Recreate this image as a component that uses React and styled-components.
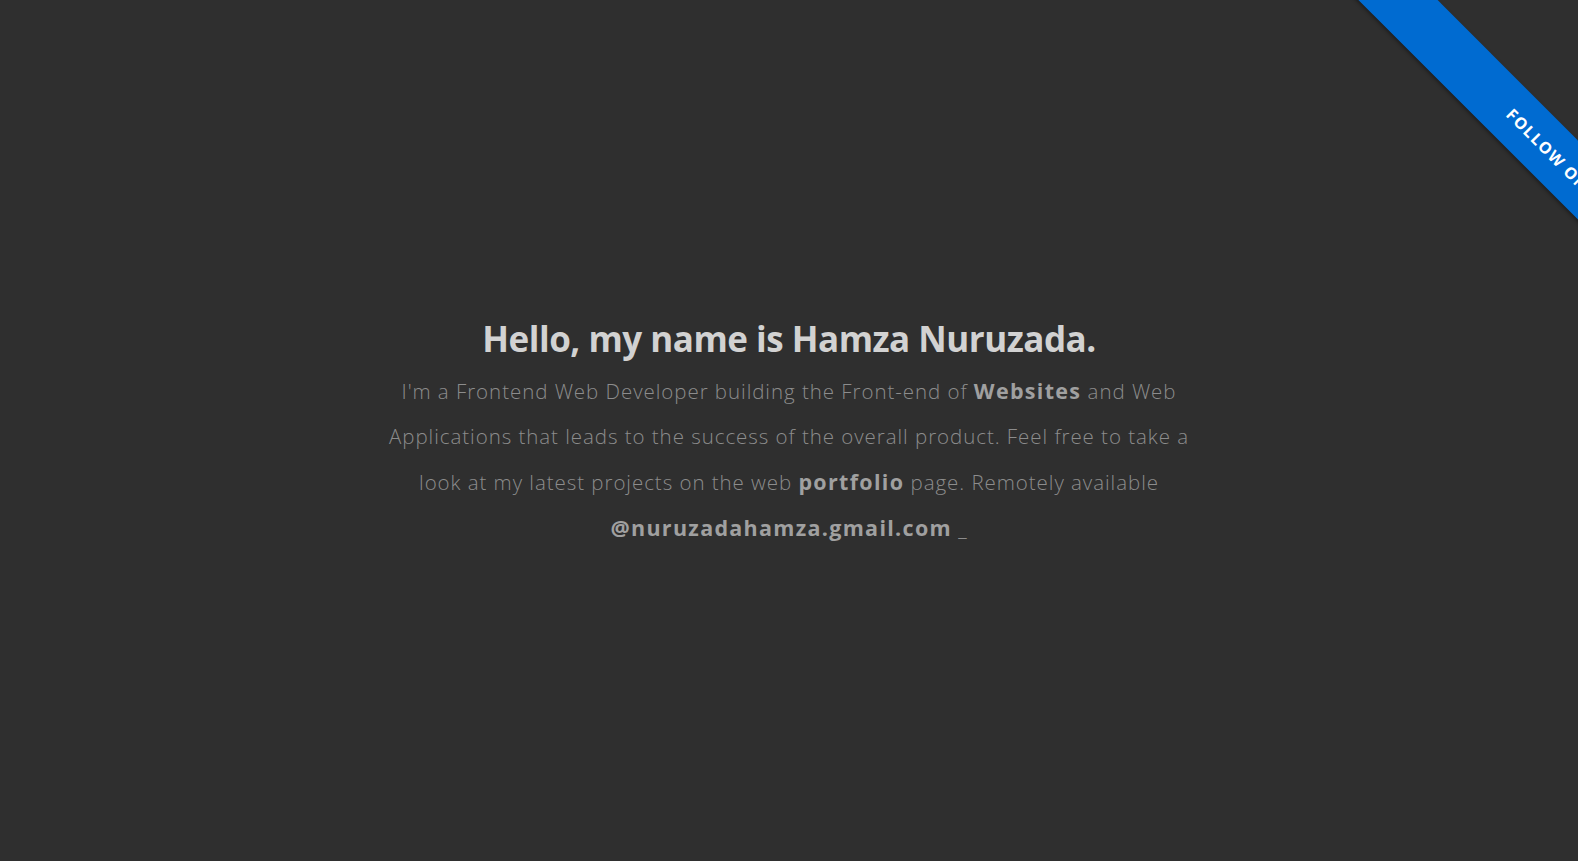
import styled, { createGlobalStyle } from 'styled-components'

const GlobalStyle = createGlobalStyle`
  html, body {
    margin: 0;
    padding: 0;
    background: #2f2f2f;
  }
  body {
    font-family: 'Open Sans', 'Liberation Sans', sans-serif;
  }
`

function App() {
  return (
    <Page>
      <GlobalStyle />
      <Ribbon href="#">Follow on GitHub</Ribbon>
      <Intro>
        <Title>Hello, my name is Hamza Nuruzada.</Title>
        <Text>
          I'm a Frontend Web Developer building the Front-end of{' '}
          <Strong>Websites</Strong> and Web
          <br />
          Applications that leads to the success of the overall product. Feel
          free to take a
          <br />
          look at my latest projects on the web <Strong>portfolio</Strong> page.
          Remotely available
          <br />
          <Strong>@nuruzadahamza.gmail.com</Strong> <Cursor>_</Cursor>
        </Text>
      </Intro>
    </Page>
  )
}

export default App

const Page = styled.main`
  position: relative;
  min-height: 100vh;
  overflow: hidden;
  display: flex;
  align-items: center;
  justify-content: center;
`

const Intro = styled.section`
  width: 900px;
  text-align: center;
  margin-top: 4px;
`

const Title = styled.h1`
  margin: 0 0 6px;
  font-size: 35px;
  font-weight: 700;
  letter-spacing: -0.5px;
  color: #d2d2d2;
`

const Text = styled.p`
  margin: 0;
  font-size: 20.5px;
  font-weight: 300;
  line-height: 45px;
  letter-spacing: 0.95px;
  color: #8c8c8c;
`

const Strong = styled.strong`
  font-size: 21.5px;
  font-weight: 700;
  letter-spacing: 1.3px;
  color: #a0a0a0;
`

const Cursor = styled.span`
  color: #8c8c8c;
`

const Ribbon = styled.a`
  position: absolute;
  top: 113px;
  right: -261px;
  width: 600px;
  height: 56px;
  box-sizing: border-box;
  padding-left: 258px;
  line-height: 56px;
  background: #006bd1;
  color: #ffffff;
  font-size: 16px;
  font-weight: 700;
  letter-spacing: 1.3px;
  text-transform: uppercase;
  text-decoration: none;
  white-space: nowrap;
  transform: rotate(45deg);
  box-shadow: -2px 2px 4px rgba(0, 0, 0, 0.35);
`
